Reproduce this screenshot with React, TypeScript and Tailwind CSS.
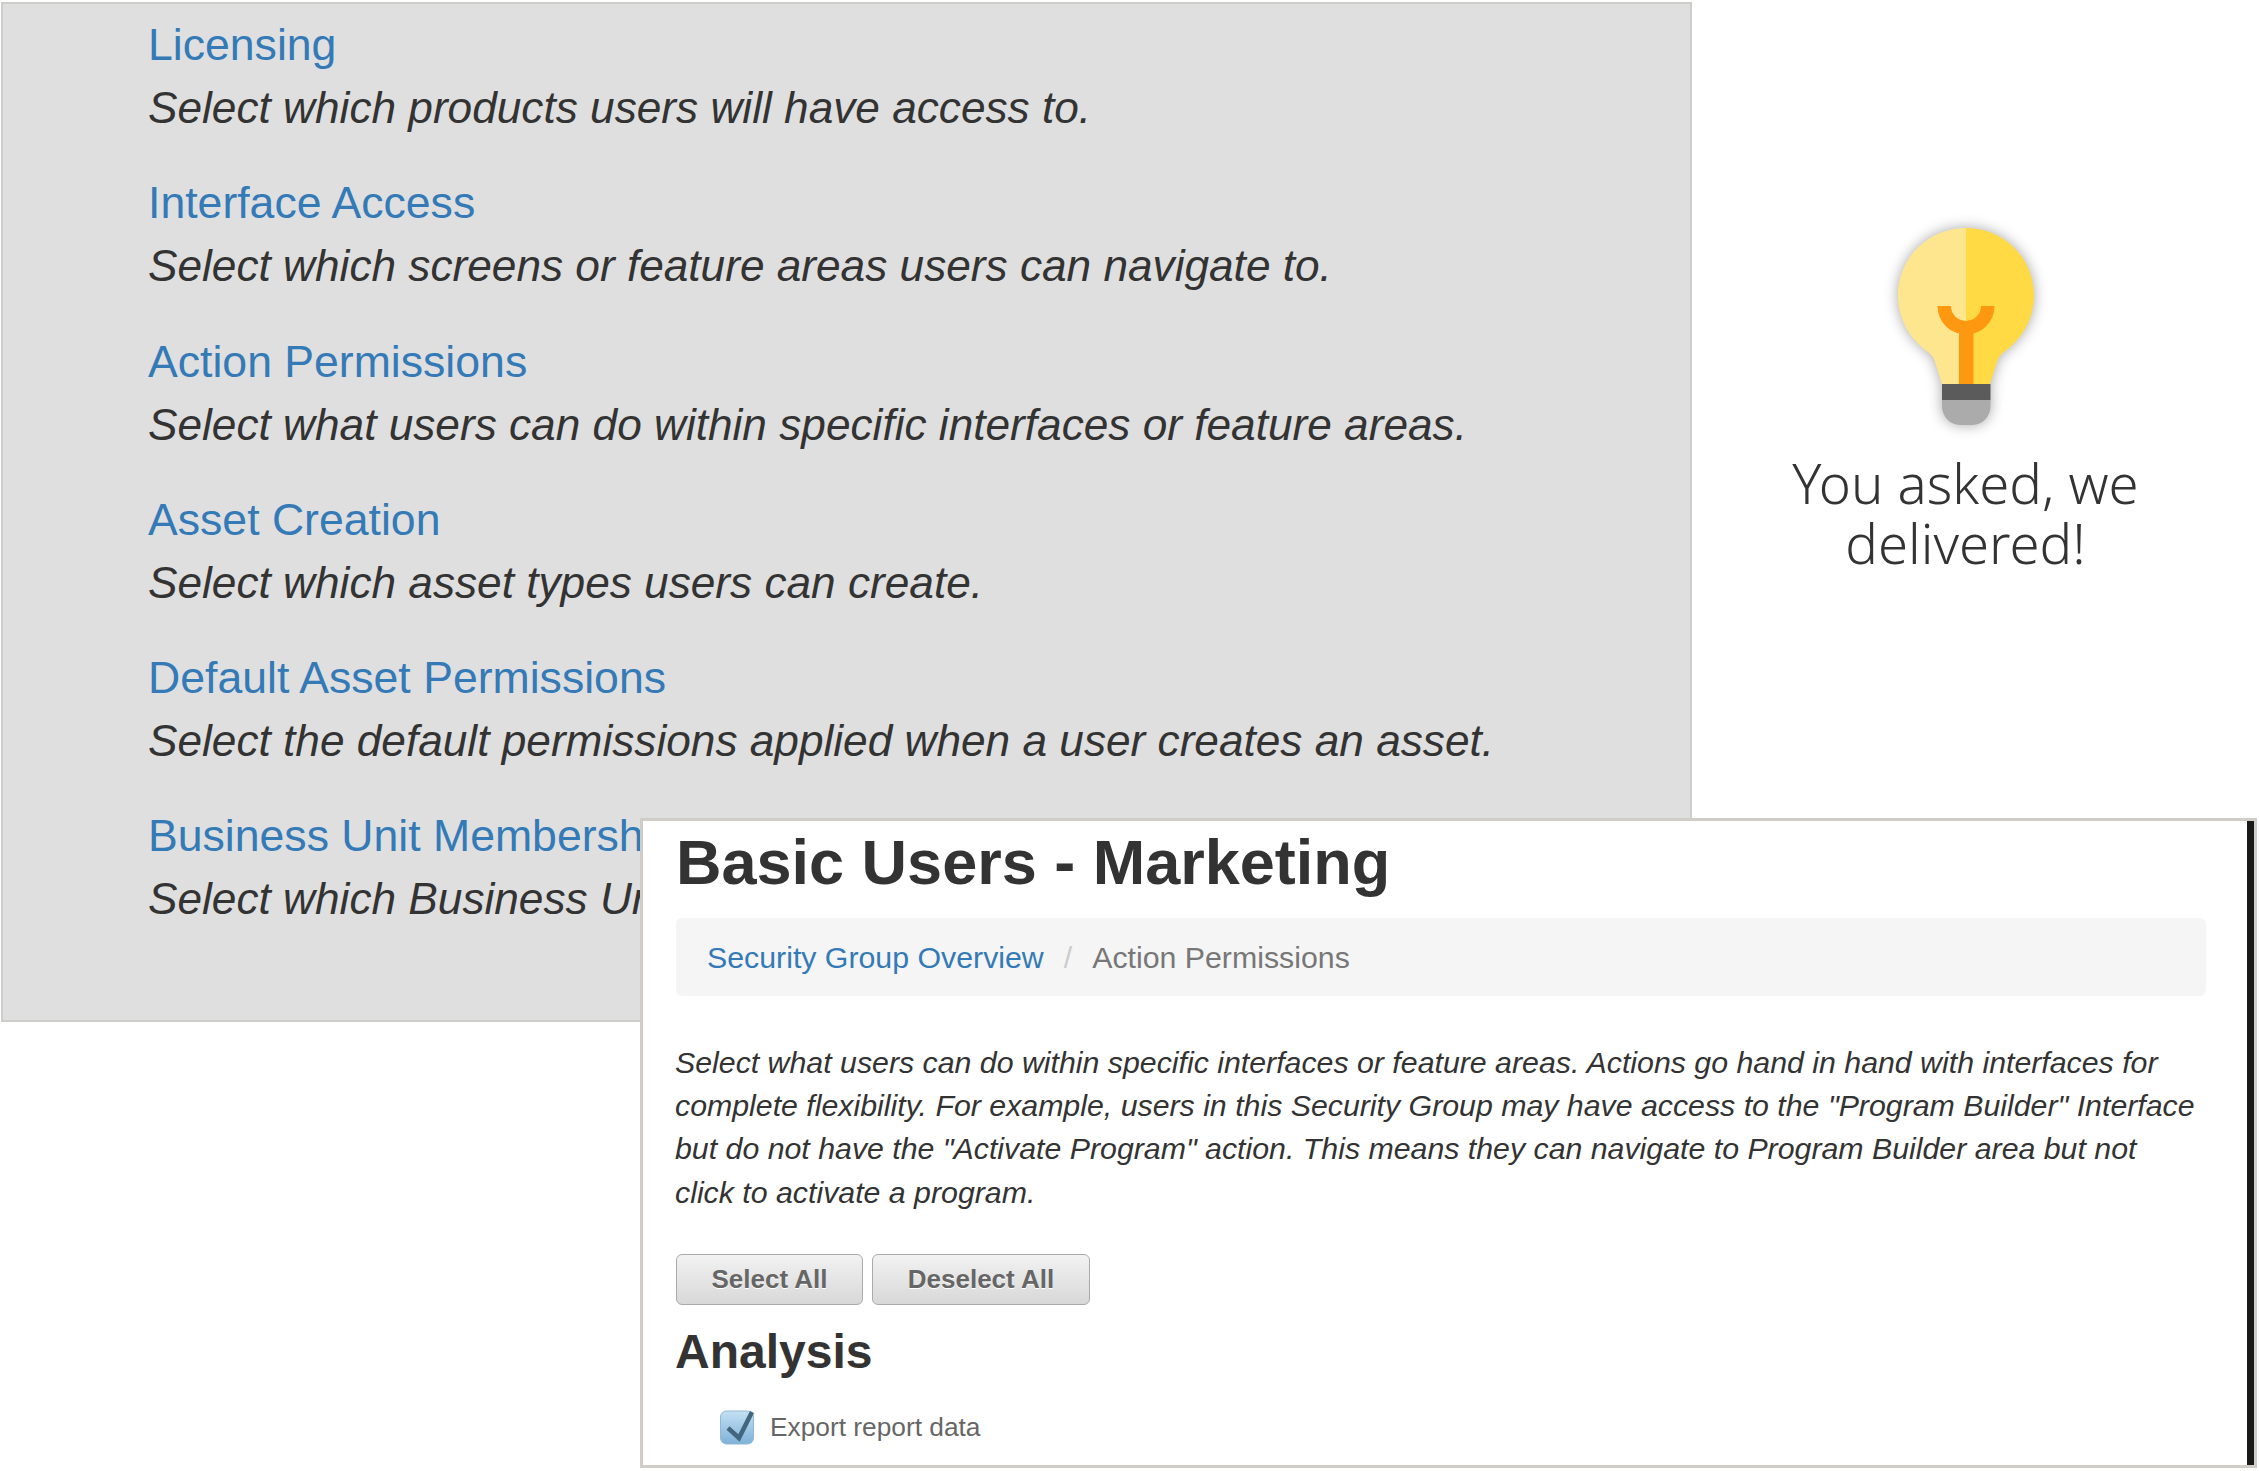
import React from 'react';

const permissionAreas = [
  { title: 'Licensing', desc: 'Select which products users will have access to.' },
  { title: 'Interface Access', desc: 'Select which screens or feature areas users can navigate to.' },
  { title: 'Action Permissions', desc: 'Select what users can do within specific interfaces or feature areas.' },
  { title: 'Asset Creation', desc: 'Select which asset types users can create.' },
  { title: 'Default Asset Permissions', desc: 'Select the default permissions applied when a user creates an asset.' },
  { title: 'Business Unit Membership', desc: 'Select which Business Units users will have access to.' },
];

function Bulb() {
  return (
    <svg viewBox="0 0 160 197" className="w-[160px] h-[197px] overflow-visible drop-shadow-[0_0_7px_rgba(0,0,0,0.35)]">
      {/* glass, left half lighter */}
      <path d="M80 0 C42 0 12 30 12 67.5 C12 92 25 112 42 124 C46 127 48 130 49 134 L56 156 L80 156 Z" fill="#fee68f" />
      <path d="M80 0 C118 0 148 30 148 67.5 C148 92 135 112 118 124 C114 127 112 130 111 134 L104 156 L80 156 Z" fill="#ffda44" />
      {/* filament */}
      <path d="M51.5 78 A28.5 28.5 0 0 0 108.5 78 L95 78 A15 15 0 0 1 65 78 Z" fill="#ff9811" />
      <rect x="73" y="100" width="14.5" height="56" fill="#ff9811" />
      {/* screw base */}
      <rect x="56" y="156" width="48.5" height="16" fill="#5b5b5b" />
      <path d="M56 172 L104.5 172 L104.5 178 A18 19 0 0 1 86.5 197 L74 197 A18 19 0 0 1 56 178 Z" fill="#ababab" />
    </svg>
  );
}

function CheckBox() {
  return (
    <svg viewBox="0 0 35 35" className="w-[35px] h-[35px] shrink-0">
      <defs>
        <linearGradient id="boxFill" x1="0" y1="0" x2="0" y2="1">
          <stop offset="0" stopColor="#c4e0f4" />
          <stop offset="1" stopColor="#7fb1d8" />
        </linearGradient>
      </defs>
      <rect x="0.5" y="1" width="33" height="33" rx="6" fill="url(#boxFill)" stroke="#8fb8d8" />
      <path d="M8 18 L19 28 L32 2" fill="none" stroke="#43667f" strokeWidth="4.5" />
    </svg>
  );
}

export default function App() {
  return (
    <div className="w-[2259px] h-[1471px] overflow-hidden bg-white font-['Liberation_Sans',Arial,sans-serif] text-[#333]">
      <div className="flex items-start pt-[2px] pl-[1px]">
        {/* Left: the permission areas list */}
        <div className="w-[1691px] h-[1020px] shrink-0 border-2 border-[#cfcdc9] bg-[#dfdfdf] pl-[145px] pt-[9px]">
          {permissionAreas.map((area) => (
            <div key={area.title} className="mb-[32.3px] whitespace-nowrap">
              <div className="text-[44.6px] leading-[63px] text-[#337ab7]">{area.title}</div>
              <div className="text-[44.2px] leading-[63px] italic text-[#333]">{area.desc}</div>
            </div>
          ))}
        </div>

        {/* Right: the callout */}
        <div className="flex-1 flex flex-col items-center pt-[226px] pr-[20px]">
          <Bulb />
          <div className="mt-[28px] w-[400px] text-center text-[54.5px] leading-[60px] font-light text-[#333] font-['Noto_Sans',sans-serif]">
            You asked, we delivered!
          </div>
        </div>
      </div>

      {/* Foreground window overlapping the list */}
      <div className="relative z-10 ml-[640px] -mt-[204px] w-[1617px] h-[650px] border-[3px] border-[#d0cdc9] bg-white">
        <div className="h-full border-r-[7px] border-[#1a1a1a] pl-[33px] pr-[41px] pt-[3px]">
          <h1 className="text-[63px] leading-[77px] font-bold text-[#333]">Basic Users - Marketing</h1>

          <div className="mt-[17px] h-[78px] rounded-[6px] bg-[#f5f5f5] pl-[31px] pt-[2px] flex items-center text-[30.3px]">
            <span className="text-[#337ab7]">Security Group Overview</span>
            <span className="px-[20px] text-[#ccc]">/</span>
            <span className="text-[#777]">Action Permissions</span>
          </div>

          <p className="mt-[45px] -ml-[1px] text-[30.3px] leading-[43.2px] italic text-[#333]">
            Select what users can do within specific interfaces or feature areas. Actions go hand in hand with interfaces for
            <br />
            complete flexibility. For example, users in this Security Group may have access to the "Program Builder" Interface
            <br />
            but do not have the "Activate Program" action. This means they can navigate to Program Builder area but not
            <br />
            click to activate a program.
          </p>

          <div className="mt-[40px] flex gap-[9px]">
            <button className="w-[187px] h-[51px] rounded-[6px] border border-[#aaa] bg-gradient-to-b from-[#f2f2f2] to-[#d8d8d8] text-[26px] font-bold text-[#666] [text-shadow:0_1px_0_#fff]">
              Select All
            </button>
            <button className="w-[218px] h-[51px] rounded-[6px] border border-[#aaa] bg-gradient-to-b from-[#f2f2f2] to-[#d8d8d8] text-[26px] font-bold text-[#666] [text-shadow:0_1px_0_#fff]">
              Deselect All
            </button>
          </div>

          <h2 className="mt-[14px] -ml-[1px] text-[48px] leading-[66px] font-bold text-[#333]">Analysis</h2>

          <label className="mt-[23px] ml-[44px] flex items-center gap-[15px] text-[26.3px] text-[#666]">
            <CheckBox />
            Export report data
          </label>
        </div>
      </div>
    </div>
  );
}
